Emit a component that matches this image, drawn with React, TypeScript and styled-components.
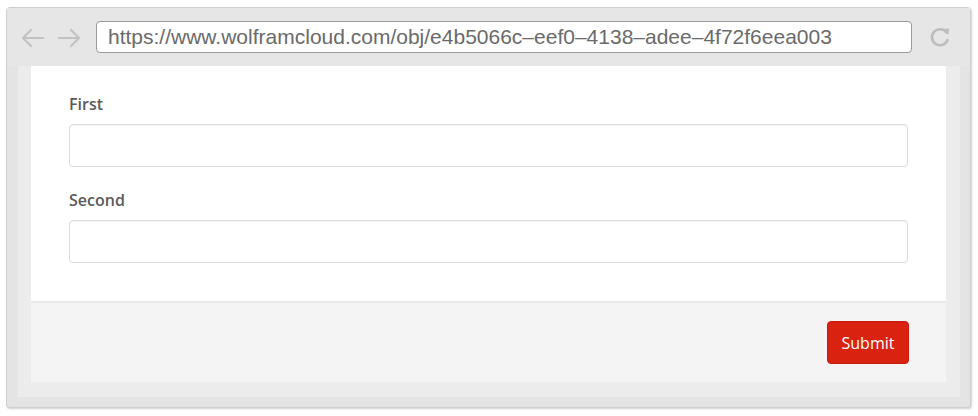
import styled, { createGlobalStyle } from "styled-components"

const GlobalStyle = createGlobalStyle`
  html, body {
    margin: 0;
    padding: 0;
    background: #ffffff;
  }
  body {
    width: 978px;
    height: 416px;
    overflow: hidden;
  }
`

const ArrowLeft: React.FC = () => (
  <svg width="25" height="20" viewBox="0 0 25 20">
    <path d="M23 10 H3 M11 2 L3 10 L11 18" fill="none" stroke="#c2c2c2" strokeWidth="2.2" strokeLinecap="round" strokeLinejoin="round" />
  </svg>
)

const ArrowRight: React.FC = () => (
  <svg width="25" height="20" viewBox="0 0 25 20">
    <path d="M2 10 H22 M14 2 L22 10 L14 18" fill="none" stroke="#c2c2c2" strokeWidth="2.2" strokeLinecap="round" strokeLinejoin="round" />
  </svg>
)

const Reload: React.FC = () => (
  <svg width="22" height="22" viewBox="0 0 22 22">
    <path d="M17.5 6.5 A8 8 0 1 0 18.5 14" fill="none" stroke="#bdbdbd" strokeWidth="2.6" strokeLinecap="round" />
    <path d="M13.5 3 L20 2.5 L19.5 9 Z" fill="#bdbdbd" />
  </svg>
)

const App: React.FC = () => {
  return (
    <>
      <GlobalStyle />
      <Page>
        <Window>
          <Toolbar>
            <NavButton>
              <ArrowLeft />
            </NavButton>
            <NavButton>
              <ArrowRight />
            </NavButton>
            <UrlBar>https://www.wolframcloud.com/obj/e4b5066c–eef0–4138–adee–4f72f6eea003</UrlBar>
            <ReloadButton>
              <Reload />
            </ReloadButton>
          </Toolbar>
          <Frame>
            <Content>
              <Form>
                <Field>
                  <Label>First</Label>
                  <Input type="text" />
                </Field>
                <Field>
                  <Label>Second</Label>
                  <Input type="text" />
                </Field>
              </Form>
              <Footer>
                <SubmitButton>Submit</SubmitButton>
              </Footer>
            </Content>
          </Frame>
        </Window>
      </Page>
    </>
  )
}

export default App

const Page = styled.div`
  width: 978px;
  height: 416px;
  padding: 7px 0 0 6px;
  box-sizing: border-box;
`

const Window = styled.div`
  width: 965px;
  height: 401px;
  box-sizing: border-box;
  background-color: #e4e4e4;
  border: 1px solid #cfcfcf;
  border-radius: 4px 4px 3px 3px;
  box-shadow: 1px 1px 2px rgba(0, 0, 0, 0.18);
  display: flex;
  flex-direction: column;
`

const Toolbar = styled.div`
  height: 58px;
  display: flex;
  align-items: center;
  padding: 0 0 0 13px;
  box-sizing: border-box;
  background-color: #e6e6e6;
`

const NavButton = styled.div`
  width: 25px;
  height: 20px;
  display: flex;
  align-items: center;
  margin-right: 12px;
  padding-top: 2px;
`

const UrlBar = styled.div`
  margin-left: 2px;
  width: 816px;
  height: 32px;
  box-sizing: border-box;
  background-color: #ffffff;
  border: 1px solid #9a9a9a;
  border-radius: 4px;
  padding: 0 11px;
  display: flex;
  align-items: center;
  font-family: "Liberation Sans", Arial, sans-serif;
  font-size: 21px;
  color: #6a6a6a;
  white-space: nowrap;
  overflow: hidden;
`

const ReloadButton = styled.div`
  margin-left: 17px;
  width: 22px;
  height: 22px;
  display: flex;
  align-items: center;
  justify-content: center;
`

const Frame = styled.div`
  flex: 1;
  margin: 0 10px 10px 11px;
  padding: 0 14px 15px 13px;
  background-color: #ececec;
  display: flex;
`

const Content = styled.div`
  flex: 1;
  display: flex;
  flex-direction: column;
  background-color: #ffffff;
`

const Form = styled.div`
  flex: 1;
  display: flex;
  flex-direction: column;
  gap: 21px;
  padding: 26px 38px 0 38px;
`

const Field = styled.div`
  display: flex;
  flex-direction: column;
  gap: 8px;
`

const Label = styled.label`
  font-family: "Open Sans", "Noto Sans", sans-serif;
  font-size: 16px;
  font-weight: 600;
  color: #5a5a5a;
  line-height: 24px;
`

const Input = styled.input`
  height: 43px;
  box-sizing: border-box;
  border: 1px solid #dcdcdc;
  border-radius: 4px;
  box-shadow: inset 0 1px 1px rgba(0, 0, 0, 0.04);
  background: #ffffff;
  outline: none;
  padding: 0 10px;
  font-family: "Open Sans", sans-serif;
  font-size: 15px;
`

const Footer = styled.div`
  height: 81px;
  box-sizing: border-box;
  border-top: 2px solid #e9e9e9;
  background-color: #f4f4f4;
  display: flex;
  justify-content: flex-end;
  align-items: center;
  padding-right: 37px;
`

const SubmitButton = styled.button`
  width: 82px;
  height: 43px;
  padding: 0;
  border: 1px solid #c81b0b;
  border-radius: 4px;
  background-color: #da2210;
  color: #ffffff;
  font-family: "Open Sans", "Noto Sans", sans-serif;
  font-size: 16px;
  font-weight: 500;
  cursor: pointer;
`
